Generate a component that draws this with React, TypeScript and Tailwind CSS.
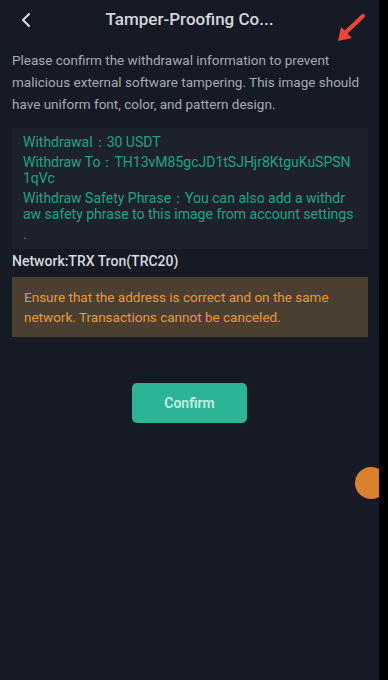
import { ChevronLeft } from 'lucide-react';

const font = { fontFamily: 'Roboto, "Noto Sans", sans-serif' };

const RedArrow = () => (
    <svg className="absolute left-[334px] top-[12px]" width="34" height="34" viewBox="0 0 34 34">
        <path d="M29 4 L10 22" stroke="#f0453a" strokeWidth="4" strokeLinecap="round" />
        <path d="M4 29 L7 15 L18 26 Z" fill="#f0453a" />
    </svg>
);

const App = () => {
    return (
        <div className="flex h-[680px] w-full bg-black" style={font}>
            <div className="relative flex w-[379px] flex-col overflow-hidden bg-[#161a25] px-3">
                <header className="relative flex h-[40px] items-center justify-center">
                    <ChevronLeft className="absolute left-[2px] top-[8px] text-[#d5d8de]" size={24} strokeWidth={2.2} />
                    <h1 className="text-[17px] font-medium text-[#d3d6dc]">Tamper-Proofing Co...</h1>
                </header>
                <RedArrow />

                <p className="mt-[9px] text-[13.5px] leading-[22px] text-[#a5aab4]">
                    Please confirm the withdrawal information to prevent malicious external software tampering. This image should have uniform font, color, and pattern design.
                </p>

                <div className="mt-[13px] mr-[-1px] flex flex-col gap-[4px] bg-[#1c212c] px-[11px] pt-[6px] pb-[7px] text-[14px] leading-[16px] text-[#1fa386]">
                    <p>Withdrawal：30 USDT</p>
                    <p className="break-all">Withdraw To：TH13vM85gcJD1tSJHjr8KtguKuSPSN1qVc</p>
                    <p className="break-all">
                        Withdraw Safety Phrase：You can also add a withdr
                        <br />
                        aw safety phrase to this image from account settings
                    </p>
                    <p>.</p>
                </div>

                <p className="mt-[2px] text-[14px] font-medium leading-[20px] text-[#d6d9df]">Network:TRX Tron(TRC20)</p>

                <div className="mt-[6px] mr-[-1px] bg-[#4a3f31] px-[12px] py-[10px] text-[13.5px] leading-[20px] text-[#e59a37]">
                    Ensure that the address is correct and on the same network. Transactions cannot be canceled.
                </div>

                <div className="mt-[46px] flex justify-center">
                    <button className="h-[40px] w-[115px] rounded-[5px] bg-[#2bb596] text-[14px] font-semibold text-[#c6efe4]">Confirm</button>
                </div>

                <div className="absolute left-[355px] top-[467px] h-[32px] w-[32px] rounded-full bg-[#d9812c]" />
            </div>
            <div className="flex-1 bg-black" />
        </div>
    );
};

export default App;
